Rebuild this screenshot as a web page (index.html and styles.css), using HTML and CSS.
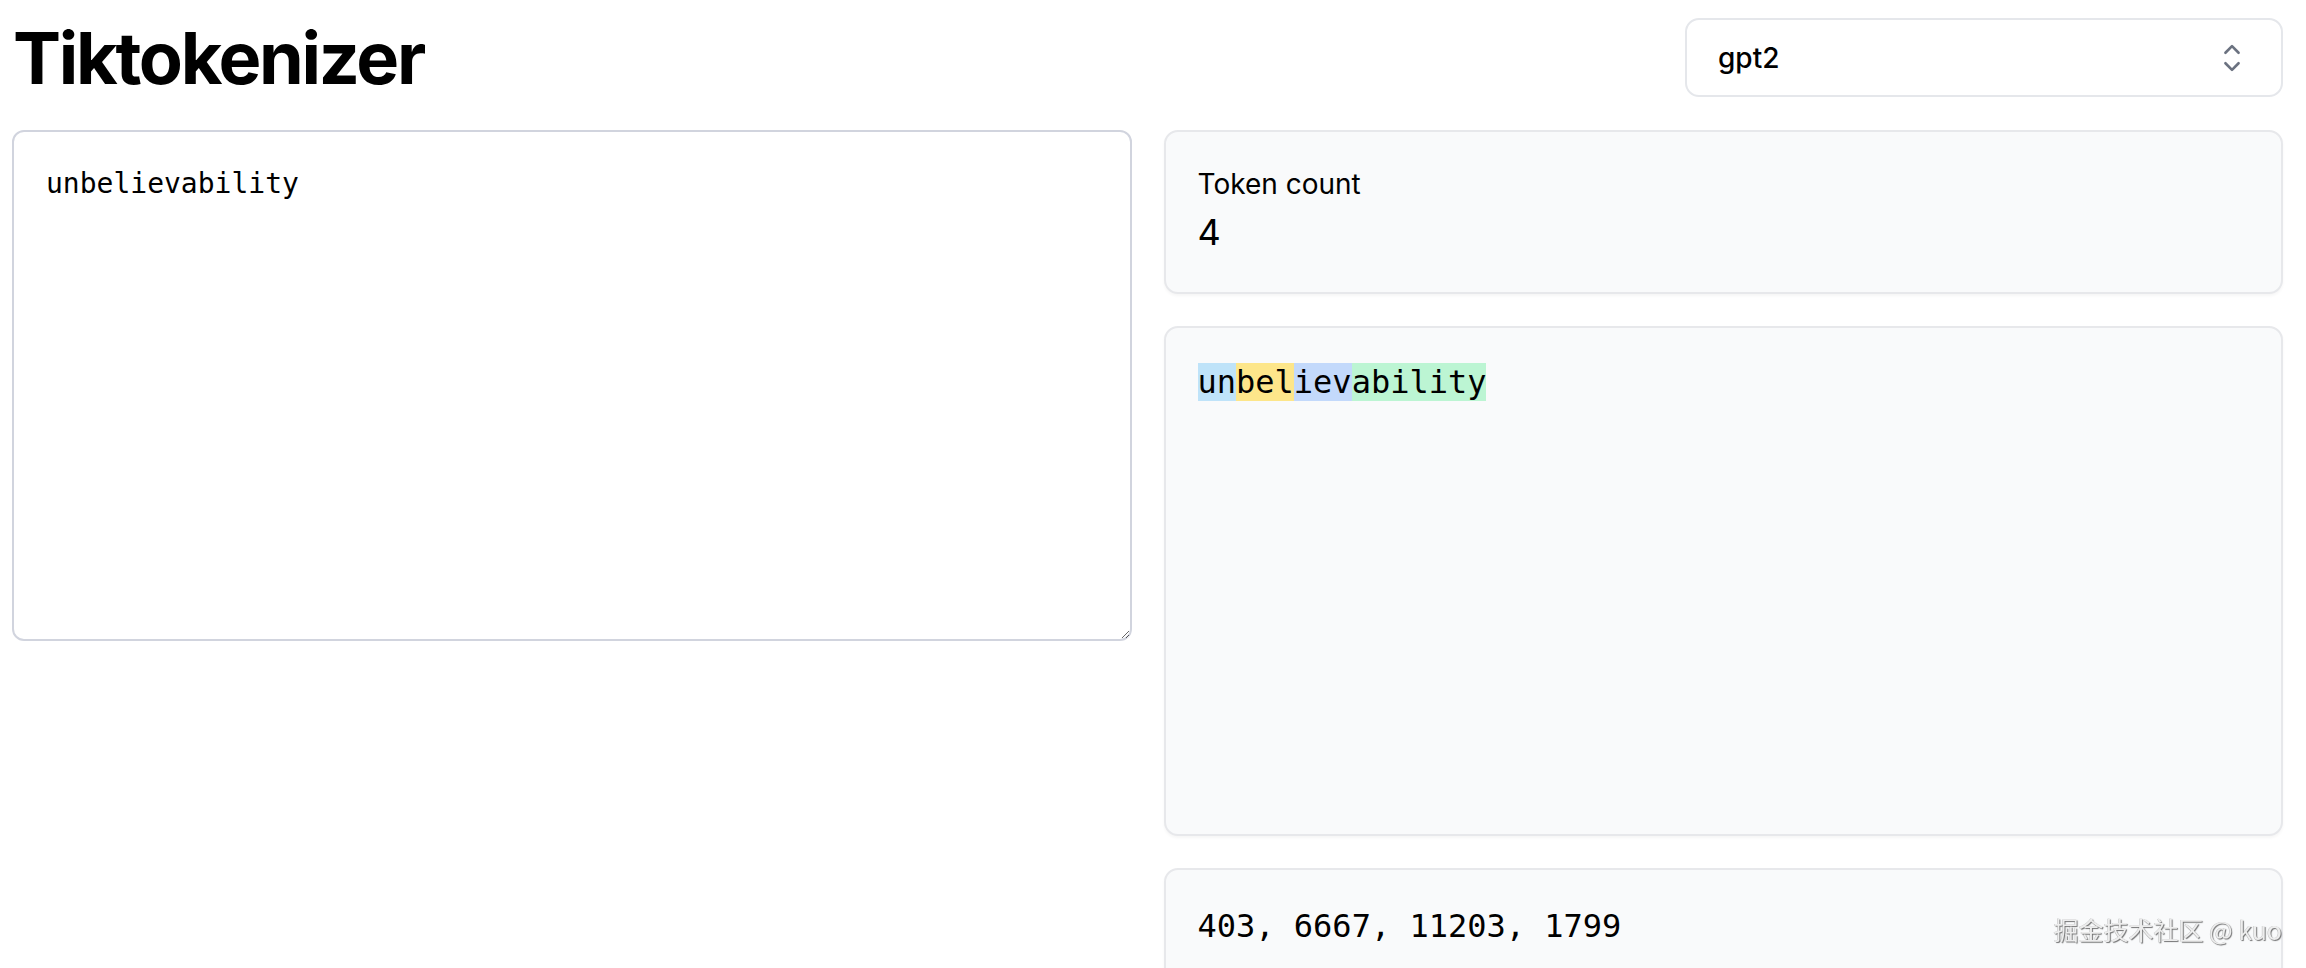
FILE: index.html
```html
<!DOCTYPE html>
<html lang="en">
<head>
<meta charset="utf-8">
<title>Tiktokenizer</title>
<link rel="stylesheet" href="styles.css">
</head>
<body>
<main class="page">
  <header class="header">
    <h1 class="title">Tiktokenizer</h1>
    <div class="select">
      <span class="select-value">gpt2</span>
      <svg class="select-icon" viewBox="0 0 24 24" fill="none" stroke="currentColor" stroke-width="1.5" stroke-linecap="round" stroke-linejoin="round"><path d="M8.25 15L12 18.75 15.75 15m-7.5-6L12 5.25 15.75 9"/></svg>
    </div>
  </header>
  <section class="grid">
    <textarea class="input" spellcheck="false">unbelievability</textarea>
    <div class="right">
      <div class="panel">
        <div class="count-label">Token count</div>
        <div class="count-value">4</div>
      </div>
      <div class="panel tokens"><span class="tok tok-sky">un</span><span class="tok tok-amber">bel</span><span class="tok tok-blue">iev</span><span class="tok tok-green">ability</span></div>
      <div class="panel ids">403, 6667, 11203, 1799</div>
    </div>
  </section>
</main>
<div class="watermark">掘金技术社区 @ kuo</div>
</body>
</html>
```
FILE: styles.css
```css
html, body {
  margin: 0;
  background: #ffffff;
}
body {
  font-family: Inter, "Noto Sans", "Liberation Sans", sans-serif;
  color: #000000;
  overflow: hidden;
}
.page {
  padding: 18px 23px 0 12px;
}
.header {
  display: flex;
  justify-content: space-between;
  align-items: center;
  margin-bottom: 33px;
}
.title {
  margin: 0;
  font-size: 72px;
  line-height: 1;
  font-weight: 700;
  letter-spacing: -2.3px;
  padding-left: 1px;
}
.select {
  box-sizing: border-box;
  width: 598px;
  height: 79px;
  border: 2px solid #e5e7eb;
  border-radius: 14px;
  background: #ffffff;
  display: flex;
  align-items: center;
  justify-content: space-between;
  padding: 0 28px 0 31px;
  font-size: 28px;
  font-weight: 500;
}
.select-icon {
  width: 42px;
  height: 42px;
  color: #6b7280;
}
.grid {
  display: grid;
  grid-template-columns: 1fr 1fr;
  gap: 32px;
  align-items: start;
}
.input {
  display: block;
  box-sizing: border-box;
  width: 100%;
  height: 511px;
  margin: 0;
  border: 2px solid #d1d4de;
  border-radius: 12px;
  padding: 32px;
  font-family: "DejaVu Sans Mono", "Liberation Mono", monospace;
  font-size: 28px;
  line-height: 40px;
  color: #000000;
  resize: vertical;
  outline: none;
}
.right {
  display: flex;
  flex-direction: column;
  gap: 32px;
}
.panel {
  box-sizing: border-box;
  background: #f9fafb;
  border: 2px solid #e7e8eb;
  border-radius: 14px;
  padding: 32px;
  box-shadow: 0 2px 3px rgba(0, 0, 0, 0.04);
}
.count-label {
  font-size: 28px;
  line-height: 40px;
}
.count-value {
  font-size: 36px;
  line-height: 56px;
}
.tokens {
  height: 510px;
  font-family: "DejaVu Sans Mono", "Liberation Mono", monospace;
  font-size: 32px;
  line-height: 44px;
  white-space: pre-wrap;
}
.tok-sky { background: #bfe3f9; }
.tok-amber { background: #fde68a; }
.tok-blue { background: #c3d9fb; }
.tok-green { background: #bcf5d3; }
.ids {
  font-family: "DejaVu Sans Mono", "Liberation Mono", monospace;
  font-size: 32px;
  line-height: 48px;
  height: 200px;
}
.watermark {
  position: fixed;
  right: 24px;
  bottom: 24px;
  font-family: "Noto Sans CJK SC", "Liberation Sans", sans-serif;
  font-size: 25px;
  line-height: 30px;
  color: #ededed;
  text-shadow: 1px 1px 1px rgba(0, 0, 0, 0.55), -0.5px -0.5px 0 rgba(0, 0, 0, 0.25);
}
```
